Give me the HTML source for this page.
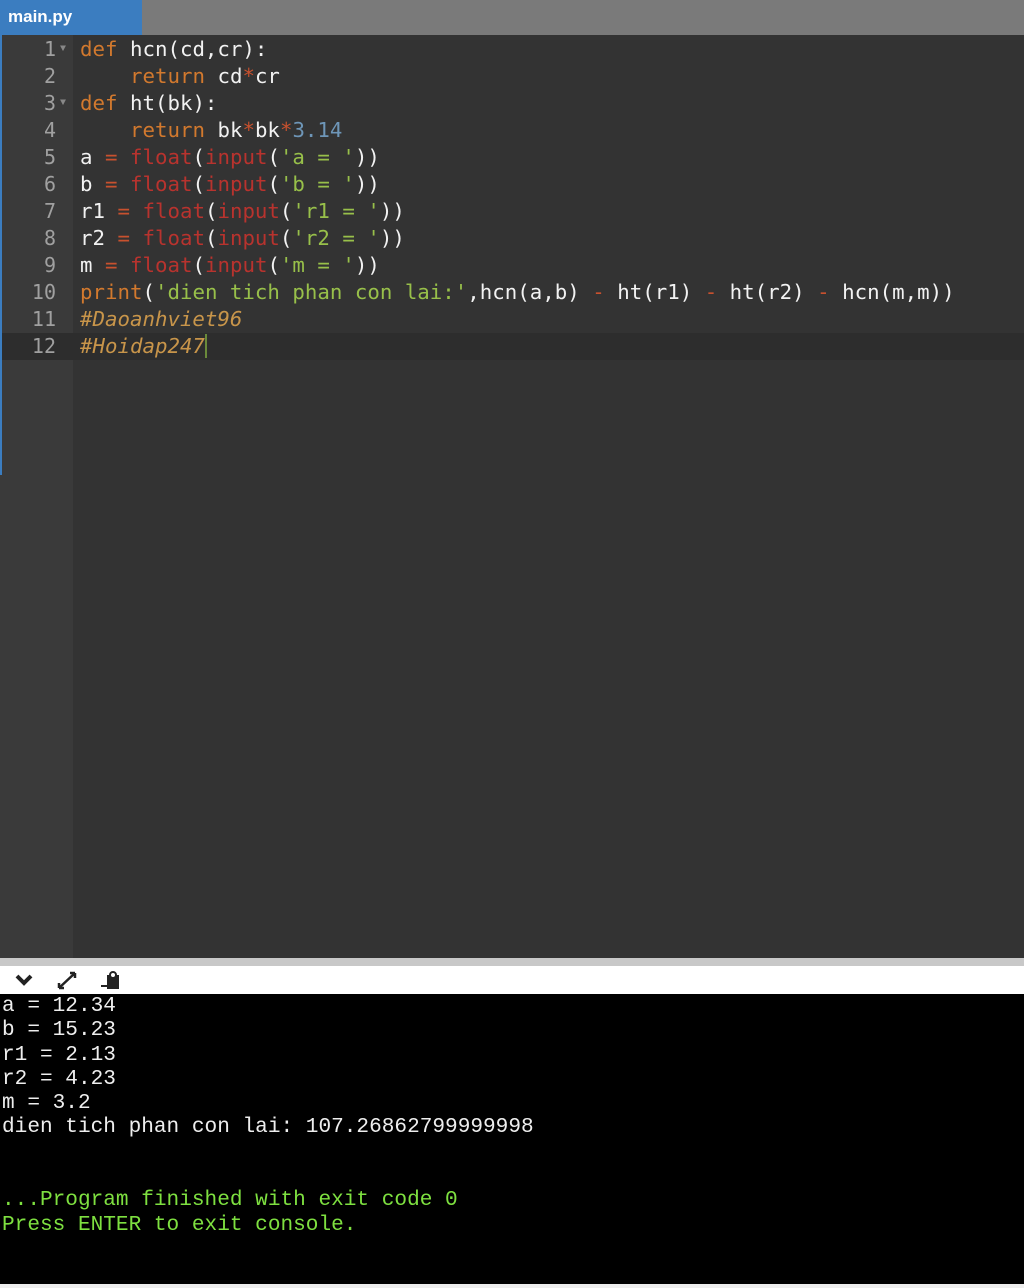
<!DOCTYPE html>
<html><head><style>
*{margin:0;padding:0;box-sizing:border-box}
body{width:1024px;height:1288px;background:#333;position:relative;overflow:hidden;font-family:"Liberation Mono",monospace}
#tabs{position:absolute;left:0;top:0;width:1024px;height:35px;background:#7a7a7a}
#tab{position:absolute;left:0;top:0;width:142px;height:35px;background:#3b7dc0;color:#fff;font:bold 17px "Liberation Sans",sans-serif;padding:7px 0 0 8px}
#gutter{position:absolute;left:0;top:35px;width:73px;height:923px;background:#3a3a3a}
#edit{position:absolute;left:73px;top:35px;width:951px;height:923px;background:#333}
#active{position:absolute;left:0;top:333px;width:1024px;height:27px;background:#2d2d2d}
.ln{position:absolute;right:968px;width:60px;text-align:right;color:#a0a0a0;font-family:"DejaVu Sans Mono",monospace;font-size:20px;line-height:27px}
.code{position:absolute;left:80px;white-space:pre;font-family:"DejaVu Sans Mono",monospace;font-size:20.75px;line-height:27px;color:#f2f2f2}
.k{color:#d2792e}.o{color:#c8512e}.f{color:#b8332e}.s{color:#98c04a}.n{color:#6e96b8}.c{color:#c8954a;font-style:italic}
.fold{position:absolute;left:60px;color:#888;font-size:10px}
#bar{position:absolute;left:0;top:958px;width:1024px;height:8px;background:#c8c8c8}
#tool{position:absolute;left:0;top:966px;width:1024px;height:28px;background:#fff}
#con{position:absolute;left:0;top:994px;width:1024px;height:290px;background:#000;color:#eee;font-family:"Liberation Mono",monospace;font-size:21.1px;line-height:24.3px;white-space:pre;padding-left:2px;padding-top:0}
.g{color:#7ee040}
#bot{position:absolute;left:0;top:1284px;width:1024px;height:4px;background:#eee}
#lstripe{position:absolute;left:0;top:35px;width:2px;height:440px;background:#3b7dc0}
</style></head><body>
<div id="tabs"><div id="tab">main.py</div></div>
<div id="gutter"></div><div id="edit"></div>
<div id="active"></div>
<div id="lstripe"></div>
<div class="ln" style="top:36px">1</div><div class="fold" style="top:44px">▼</div>
<div class="ln" style="top:63px">2</div>
<div class="ln" style="top:90px">3</div><div class="fold" style="top:98px">▼</div>
<div class="ln" style="top:117px">4</div>
<div class="ln" style="top:144px">5</div>
<div class="ln" style="top:171px">6</div>
<div class="ln" style="top:198px">7</div>
<div class="ln" style="top:225px">8</div>
<div class="ln" style="top:252px">9</div>
<div class="ln" style="top:279px">10</div>
<div class="ln" style="top:306px">11</div>
<div class="ln" style="top:333px">12</div>
<div class="code" style="top:36px"><span class="k">def</span> hcn(cd,cr):
    <span class="k">return</span> cd<span class="o">*</span>cr
<span class="k">def</span> ht(bk):
    <span class="k">return</span> bk<span class="o">*</span>bk<span class="o">*</span><span class="n">3.14</span>
a <span class="o">=</span> <span class="f">float</span>(<span class="f">input</span>(<span class="s">'a = '</span>))
b <span class="o">=</span> <span class="f">float</span>(<span class="f">input</span>(<span class="s">'b = '</span>))
r1 <span class="o">=</span> <span class="f">float</span>(<span class="f">input</span>(<span class="s">'r1 = '</span>))
r2 <span class="o">=</span> <span class="f">float</span>(<span class="f">input</span>(<span class="s">'r2 = '</span>))
m <span class="o">=</span> <span class="f">float</span>(<span class="f">input</span>(<span class="s">'m = '</span>))
<span class="k">print</span>(<span class="s">'dien tich phan con lai:'</span>,hcn(a,b) <span class="o">-</span> ht(r1) <span class="o">-</span> ht(r2) <span class="o">-</span> hcn(m,m))
<span class="c">#Daoanhviet96</span>
<span class="c">#Hoidap247</span><span style="border-left:2px solid #6a8a3a"></span></div>
<div id="bar"></div>
<div id="tool">
<svg width="140" height="28" style="position:absolute;left:0;top:0">
<path d="M17 10 L24 17 L31 10" stroke="#222" stroke-width="4" fill="none"/>
<path d="M59 22 L75 7 M59 22 l0 -5 M59 22 l5 0 M75 7 l-5 0 M75 7 l0 5" stroke="#222" stroke-width="2.5" fill="none"/>
<rect x="107" y="9" width="12" height="14" fill="#222"/><circle cx="113" cy="9" r="3" fill="#fff" stroke="#222" stroke-width="2"/><path d="M101 20 h6" stroke="#222" stroke-width="2"/>
</svg></div>
<div id="con">a = 12.34
b = 15.23
r1 = 2.13
r2 = 4.23
m = 3.2
dien tich phan con lai: 107.26862799999998


<span class="g">...Program finished with exit code 0
Press ENTER to exit console.</span></div>
<div id="bot"></div>
</body></html>
